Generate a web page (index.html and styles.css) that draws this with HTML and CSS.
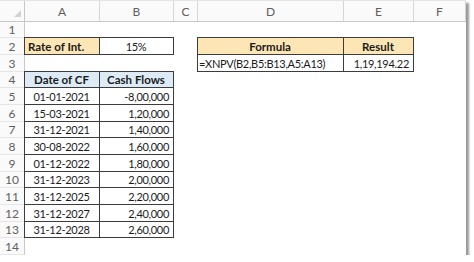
FILE: index.html
```html
<!DOCTYPE html>
<html lang="en">
<head>
  <meta charset="UTF-8" />
  <title>XNPV</title>
  <link rel="stylesheet" href="styles.css">
</head>
<body>
  <div class="sheet">
    <div class="corner"></div>
    <div class="col-head">A</div>
    <div class="col-head">B</div>
    <div class="col-head">C</div>
    <div class="col-head">D</div>
    <div class="col-head">E</div>
    <div class="col-head">F</div>

    <div class="row-head">1</div>
    <div></div><div></div><div></div><div></div><div></div><div></div>

    <div class="row-head">2</div>
    <div class="cell bx label">Rate of Int.</div>
    <div class="cell bx center">15%</div>
    <div></div>
    <div class="cell bx label center">Formula</div>
    <div class="cell bx label center">Result</div>
    <div></div>

    <div class="row-head">3</div>
    <div></div><div></div><div></div>
    <div class="cell bx formula">=XNPV(B2,B5:B13,A5:A13)</div>
    <div class="cell bx num">1,19,194.22</div>
    <div></div>

    <div class="row-head">4</div>
    <div class="cell bx th">Date of CF</div>
    <div class="cell bx th">Cash Flows</div>
    <div></div><div></div><div></div><div></div>

    <div class="row-head">5</div>
    <div class="cell bx center">01-01-2021</div>
    <div class="cell bx num">-8,00,000</div>
    <div></div><div></div><div></div><div></div>

    <div class="row-head">6</div>
    <div class="cell bx center">15-03-2021</div>
    <div class="cell bx num">1,20,000</div>
    <div></div><div></div><div></div><div></div>

    <div class="row-head">7</div>
    <div class="cell bx center">31-12-2021</div>
    <div class="cell bx num">1,40,000</div>
    <div></div><div></div><div></div><div></div>

    <div class="row-head">8</div>
    <div class="cell bx center">30-08-2022</div>
    <div class="cell bx num">1,60,000</div>
    <div></div><div></div><div></div><div></div>

    <div class="row-head">9</div>
    <div class="cell bx center">01-12-2022</div>
    <div class="cell bx num">1,80,000</div>
    <div></div><div></div><div></div><div></div>

    <div class="row-head">10</div>
    <div class="cell bx center">31-12-2023</div>
    <div class="cell bx num">2,00,000</div>
    <div></div><div></div><div></div><div></div>

    <div class="row-head">11</div>
    <div class="cell bx center">31-12-2025</div>
    <div class="cell bx num">2,20,000</div>
    <div></div><div></div><div></div><div></div>

    <div class="row-head">12</div>
    <div class="cell bx center">31-12-2027</div>
    <div class="cell bx num">2,40,000</div>
    <div></div><div></div><div></div><div></div>

    <div class="row-head">13</div>
    <div class="cell bx center">31-12-2028</div>
    <div class="cell bx num">2,60,000</div>
    <div></div><div></div><div></div><div></div>

    <div class="row-head">14</div>
    <div></div><div></div><div></div><div></div><div></div><div></div>
  </div>
</body>
</html>
```

FILE: styles.css
```css
:root {
  --grid: #d6d6d6;
  --head-text: #606060;
  --ink: #1a1a1a;
  --line: #3c3c3c;
  --gold: #fde6b6;
  --blue: #ddebf7;
}

* {
  margin: 0;
  padding: 0;
  box-sizing: border-box;
}

body {
  background: #fff;
  font-family: Lato, "Open Sans", sans-serif;
  font-size: 11px;
  letter-spacing: -0.3px;
  color: var(--ink);
}

.sheet {
  display: grid;
  grid-template-columns: 25px 75px 74px 24px 146px 70px 52px;
  grid-template-rows: 21px repeat(4, 16px 17px 17px) 16px 17px;
  width: 466px;
  background: #fff;
  border-top: 1px solid #e4e4e4;
  box-shadow: 3px 3px 2px rgba(0, 0, 0, 0.4);
}

/* headers */
.corner {
  position: relative;
  background: #fafafa;
  border-right: 1px solid #c8c8c8;
  border-bottom: 1px solid #c8c8c8;
}

.corner::after {
  content: "";
  position: absolute;
  right: 3px;
  bottom: 4px;
  border-left: 7px solid transparent;
  border-bottom: 7px solid #d2d2d2;
}

.col-head,
.row-head {
  display: flex;
  align-items: center;
  justify-content: center;
  background: #fafafa;
  color: var(--head-text);
  font-size: 12px;
  letter-spacing: 0;
}

.col-head {
  border-right: 1px solid var(--grid);
  border-bottom: 1px solid #c8c8c8;
}

.col-head:last-of-type {
  border-right: none;
}

.row-head {
  border-right: 1px solid #c8c8c8;
  border-bottom: 1px solid #e6e6e6;
}

/* cells */
.cell {
  display: flex;
  align-items: center;
  padding: 0 4px 0 3px;
  white-space: nowrap;
  overflow: hidden;
}

.bx {
  border: 1px solid var(--line);
  margin: -1px 0 0 -1px;
}

.label,
.th {
  font-weight: bold;
  font-size: 11.5px;
  letter-spacing: 0;
}

.label {
  background: var(--gold);
}

.th {
  background: var(--blue);
  justify-content: center;
}

.center {
  justify-content: center;
}

.num {
  justify-content: flex-end;
}

.formula {
  padding-left: 1px;
}
```
